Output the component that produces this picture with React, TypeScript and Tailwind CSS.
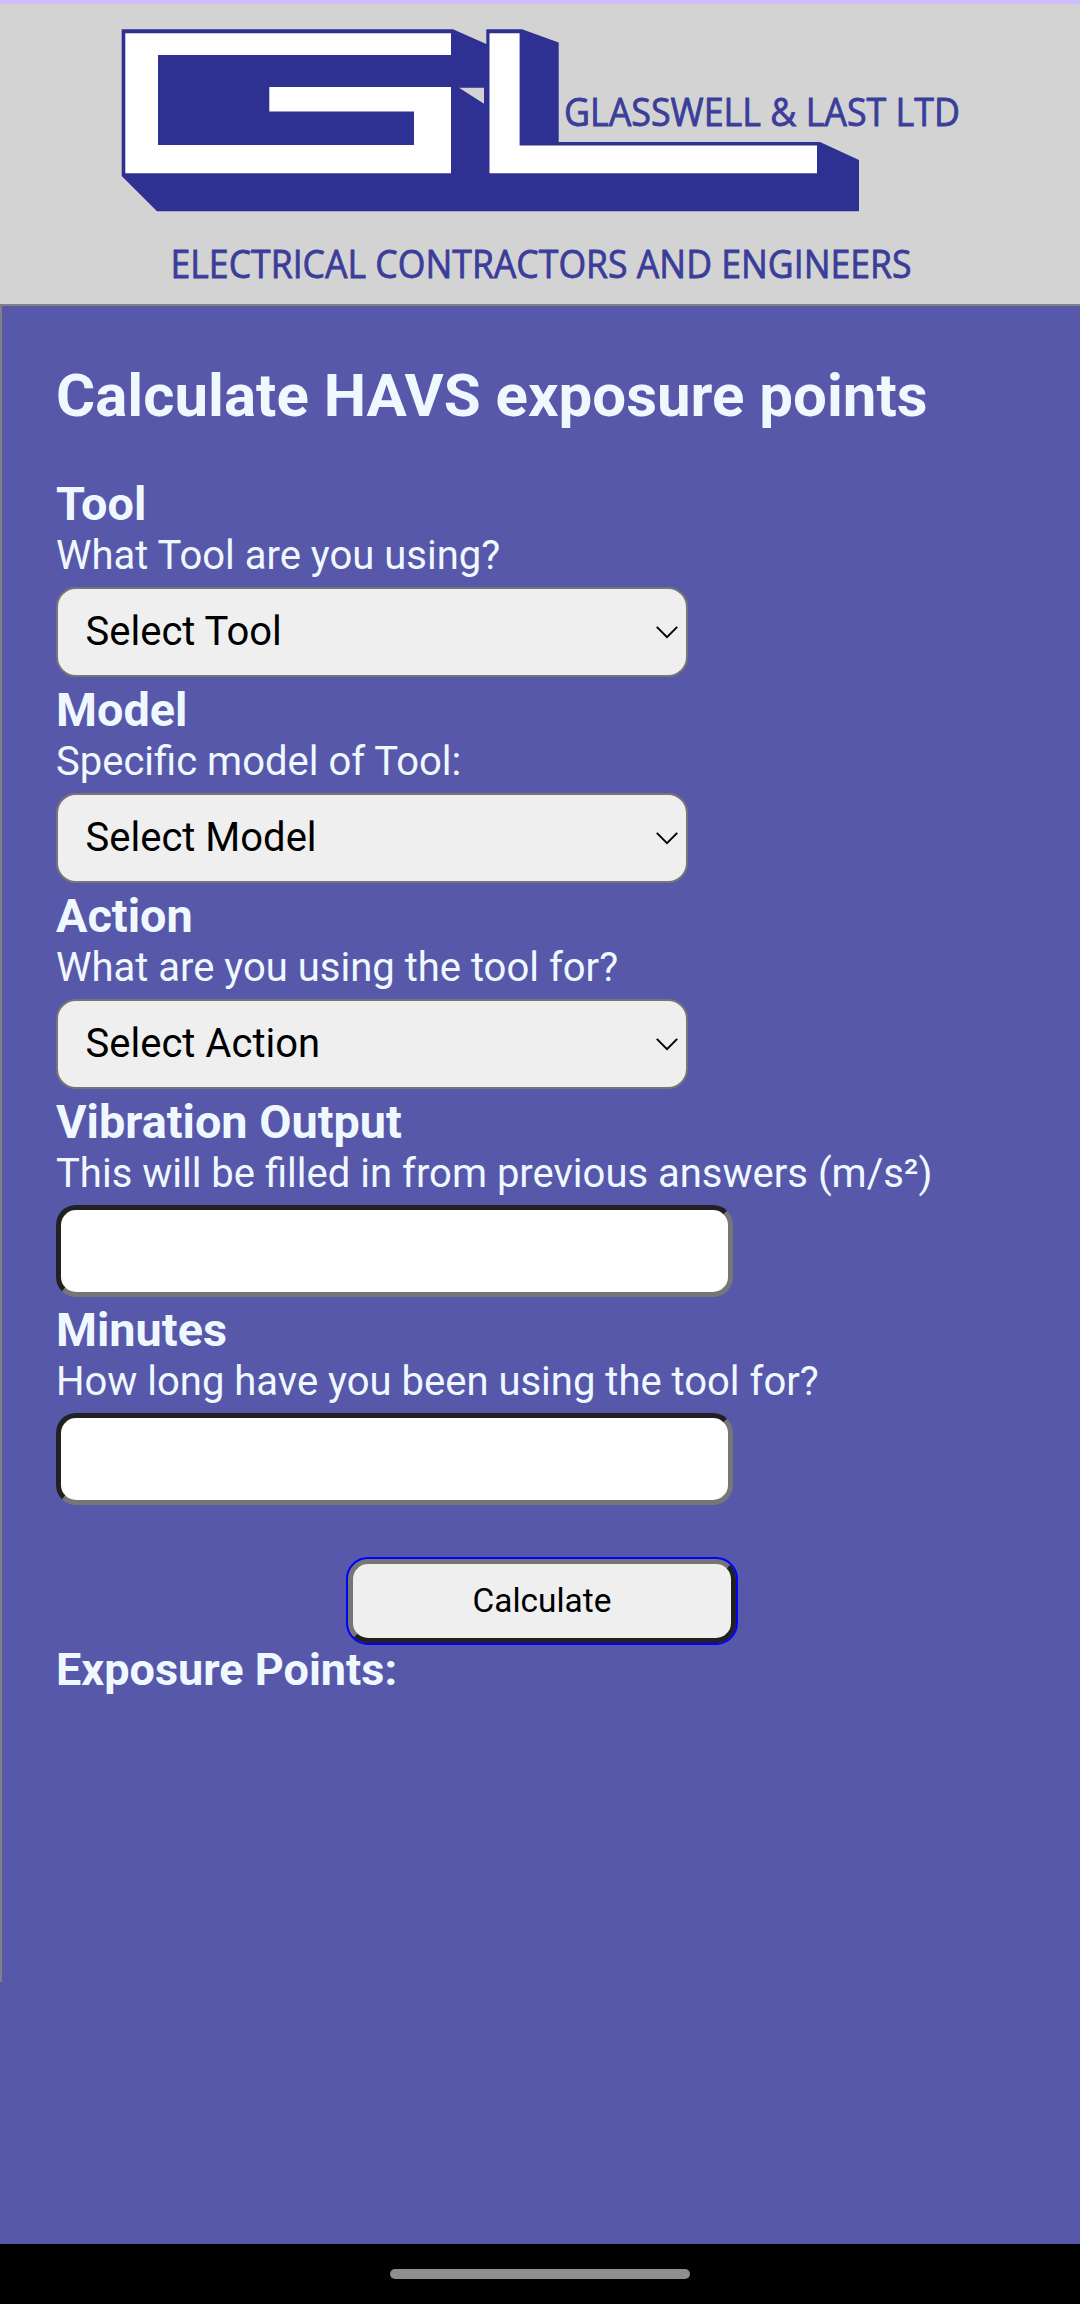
import type { ReactNode } from "react";

function Logo() {
  return (
    <svg width="1080" height="300" viewBox="0 4 1080 300" className="block">
      <path
        fill="#2e3192"
        fillRule="evenodd"
        d="M121.7 29.3H453L486.3 44V29.3H522L558.7 42.5V142H820L859 160V211.3H157L121.7 176ZM459 87.7L484 103.7V87.7Z"
      />
      <path fill="#fff" d="M125.3 33.3H451V55H158V145H414V111.5H269.3V87H451V173.3H125.3Z" />
      <path fill="#fff" d="M489.5 33.3H519.6V145.6H817V173.3H489.5Z" />
      <g
        fill="#3a3d99"
        stroke="#3a3d99"
        strokeWidth="0.8"
        fontFamily="'Open Sans', 'Noto Sans', sans-serif"
        fontSize="38"
      >
        <text x="564" y="126" textLength="396" lengthAdjust="spacingAndGlyphs">
          GLASSWELL &amp; LAST LTD
        </text>
        <text x="170.5" y="277.5" textLength="741" lengthAdjust="spacingAndGlyphs">
          ELECTRICAL CONTRACTORS AND ENGINEERS
        </text>
      </g>
    </svg>
  );
}

function Field({ title, hint, children }: { title: string; hint: string; children: ReactNode }) {
  return (
    <div className="mb-[7px]">
      <h3 className="h-[54px] text-[46.8px] leading-[53px] font-bold">{title}</h3>
      <p className="mb-2 h-[47px] text-[40px] leading-[47px]">{hint}</p>
      {children}
    </div>
  );
}

function SelectBox({ label }: { label: string }) {
  return (
    <button className="flex h-[90px] w-[632px] items-center justify-between rounded-[20px] border-2 border-[#767676] bg-[#efefef] pr-[8px] pl-[27.5px] text-[40px] leading-[47px] text-black">
      <span className="pb-[2px]">{label}</span>
      <svg width="22" height="13" viewBox="0 0 22 13" fill="none" stroke="#000" strokeWidth="2">
        <path d="M0.8 0.9L11 11.2L21.2 0.9" />
      </svg>
    </button>
  );
}

function NumberInput({ label }: { label: string }) {
  return (
    <input
      aria-label={label}
      className="block h-[92px] w-[677px] rounded-[20px] border-[5px] border-t-[#212121] border-r-[#767676] border-b-[#767676] border-l-[#212121] bg-white px-6 text-[40px] text-black"
    />
  );
}

export default function App() {
  return (
    <div className="flex h-[2304px] w-[1080px] flex-col overflow-hidden bg-[#5858ab] font-['Roboto',sans-serif] text-[#f0f8ff]">
      <div className="h-1 bg-[#d0bcff]" />
      <header className="h-[300px] bg-[#d3d3d3]">
        <Logo />
      </header>
      <main className="h-[1678px] border-t-2 border-l-2 border-[#808080] pt-[54px] pl-[54px]">
        <h1 className="mb-[48px] h-[70px] text-[60px] leading-[71px] font-bold">Calculate HAVS exposure points</h1>
        <Field title="Tool" hint="What Tool are you using?">
          <SelectBox label="Select Tool" />
        </Field>
        <Field title="Model" hint="Specific model of Tool:">
          <SelectBox label="Select Model" />
        </Field>
        <Field title="Action" hint="What are you using the tool for?">
          <SelectBox label="Select Action" />
        </Field>
        <Field title="Vibration Output" hint="This will be filled in from previous answers (m/s²)">
          <NumberInput label="Vibration Output" />
        </Field>
        <Field title="Minutes" hint="How long have you been using the tool for?">
          <NumberInput label="Minutes" />
        </Field>
        <button className="mt-[54px] ml-[292px] block h-[84px] w-[388px] rounded-[20px] border-[5px] border-t-[#767676] border-r-[#212121] border-b-[#212121] border-l-[#767676] bg-[#efefef] text-[33.4px] leading-[40px] text-black outline-2 outline-[#0000ff]">
          Calculate
        </button>
        <h3 className="text-[45px] leading-[53px] font-bold">Exposure Points:</h3>
      </main>
      <footer className="mt-auto flex h-[60px] justify-center bg-black pt-[25px]">
        <div className="h-[10px] w-[300px] rounded-full bg-[#8e8e8e]" />
      </footer>
    </div>
  );
}
